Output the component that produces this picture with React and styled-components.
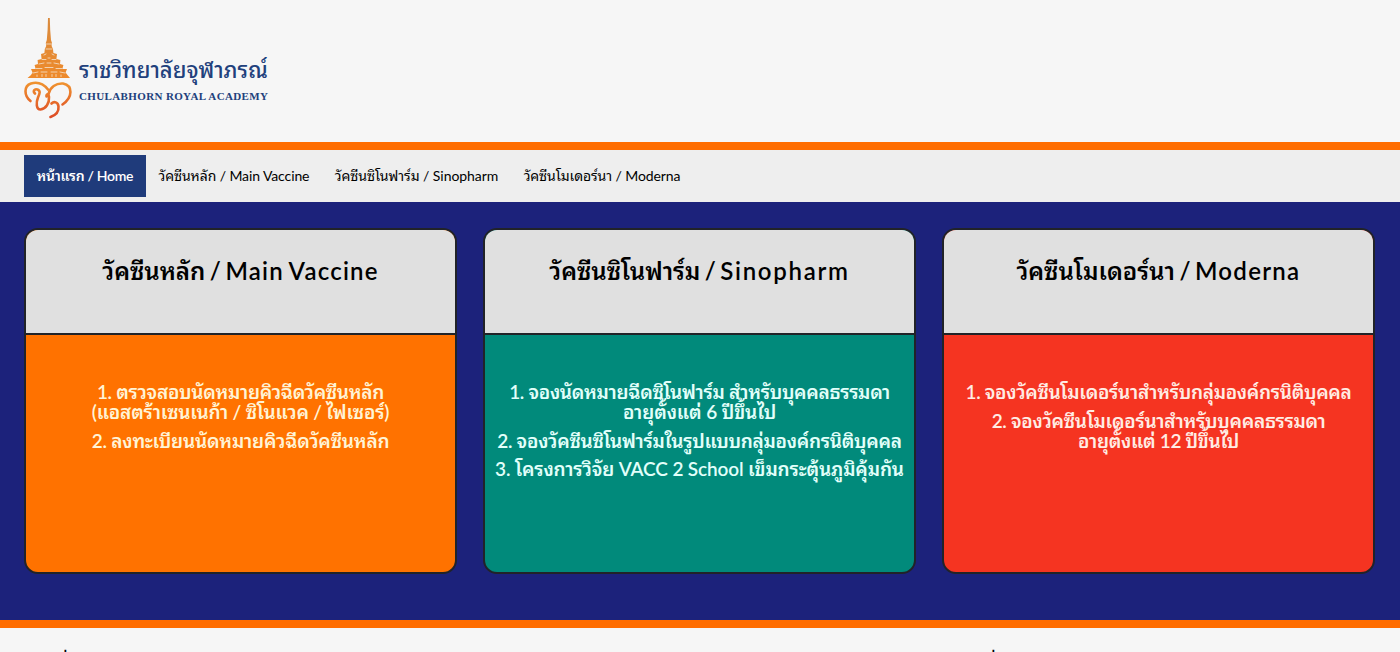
import React from "react";
import styled, { createGlobalStyle } from "styled-components";

const GlobalStyle = createGlobalStyle`
  * {
    box-sizing: border-box;
  }

  body {
    margin: 0;
    overflow: hidden;
    background-color: #f6f6f6;
    font-family: Lato, "Noto Sans Thai Looped", "Noto Sans Thai", sans-serif;
    color: #000;
  }
`;

const Page = styled.div`
  display: flex;
  flex-direction: column;
  height: 652px;
  overflow: hidden;
`;

const Header = styled.header`
  display: flex;
  flex: none;
  height: 150px;
  padding: 18px 24px 0;
  border-bottom: 8px solid #ff6d00;
`;

const Emblem = styled.svg`
  width: 49px;
  height: 102px;
`;

const Brand = styled.div`
  color: #21407c;
  padding: 35px 0 0 6px;
  white-space: nowrap;
`;

const BrandThai = styled.div`
  font-size: 22px;
  font-weight: 500;
  line-height: 34px;
`;

const BrandLatin = styled.div`
  padding-top: 1px;
  font-family: "Liberation Serif", serif;
  font-size: 11px;
  font-weight: 700;
  line-height: 16px;
  letter-spacing: 0.37px;
`;

const Nav = styled.nav`
  display: flex;
  flex: none;
  height: 52px;
  padding: 5px 24px;
  background-color: #eee;
`;

const NavLink = styled.a`
  display: flex;
  align-items: center;
  justify-content: center;
  width: ${(props) => props.$width}px;
  padding-bottom: 4px;
  font-size: 14px;
  white-space: nowrap;
  letter-spacing: ${(props) => props.$spacing}px;
  color: ${(props) => (props.$active ? "#fff" : "#000")};
  font-weight: ${(props) => (props.$active ? 600 : 400)};
  background-color: ${(props) => (props.$active ? "#1f3b7b" : "transparent")};
`;

const Main = styled.main`
  display: grid;
  grid-template-columns: repeat(3, 1fr);
  gap: 26px;
  flex: none;
  height: 426px;
  padding: 26px 25px 46px 24px;
  background-color: #1c227b;
  border-bottom: 8px solid #ff6d00;
`;

const Card = styled.section`
  border: 2px solid #212328;
  border-radius: 14px;
  overflow: hidden;
  background-color: ${(props) => props.$color};
`;

const CardTitle = styled.h2`
  height: 105px;
  margin: 0;
  padding-top: 25px;
  background-color: #e0e0e0;
  border-bottom: 2px solid #212328;
  font-size: 24px;
  font-weight: 600;
  line-height: 32px;
  text-align: center;
  white-space: nowrap;
  word-spacing: -1.5px;
`;

const TitleLatin = styled.span`
  letter-spacing: ${(props) => props.$spacing}px;
`;

const CardList = styled.div`
  display: flex;
  flex-direction: column;
  align-items: center;
  gap: 8.5px;
  padding-top: 47px;
  color: ${(props) => props.$color};
`;

const CardItem = styled.div`
  display: flex;
  flex-direction: column;
  align-items: center;
`;

const Line = styled.span`
  font-size: 19px;
  font-weight: 600;
  line-height: 20px;
  white-space: nowrap;
  letter-spacing: ${(props) => props.$spacing}px;
`;

const Footer = styled.footer`
  display: grid;
  grid-template-columns: 928px 1fr;
  padding: 19px 0 0 49px;
  font-size: 20px;
  line-height: 32px;
  white-space: nowrap;
`;

const links = [
  { text: "หน้าแรก / Home", width: 122, spacing: -0.3, active: true },
  { text: "วัคซีนหลัก / Main Vaccine", width: 176, spacing: -0.1 },
  { text: "วัคซีนซิโนฟาร์ม / Sinopharm", width: 189, spacing: -0.05 },
  { text: "วัคซีนโมเดอร์นา / Moderna", width: 182, spacing: -0.1 },
];

const cards = [
  {
    title: "วัคซีนหลัก",
    latin: "Main Vaccine",
    spacing: 1.2,
    color: "#ff7200",
    ink: "#fff4d6",
    items: [
      [
        ["1. ตรวจสอบนัดหมายคิวฉีดวัคซีนหลัก", -0.3],
        ["(แอสตร้าเซนเนก้า / ซิโนแวค / ไฟเซอร์)", -0.2],
      ],
      [["2. ลงทะเบียนนัดหมายคิวฉีดวัคซีนหลัก", -0.2]],
    ],
  },
  {
    title: "วัคซีนซิโนฟาร์ม",
    latin: "Sinopharm",
    spacing: 1.7,
    color: "#018a7b",
    ink: "#e2fffa",
    items: [
      [
        ["1. จองนัดหมายฉีดซิโนฟาร์ม สำหรับบุคคลธรรมดา", -0.31],
        ["อายุตั้งแต่ 6 ปีขึ้นไป", -0.1],
      ],
      [["2. จองวัคซีนซิโนฟาร์มในรูปแบบกลุ่มองค์กรนิติบุคคล", -0.28]],
      [["3. โครงการวิจัย VACC 2 School เข็มกระตุ้นภูมิคุ้มกัน", -0.14]],
    ],
  },
  {
    title: "วัคซีนโมเดอร์นา",
    latin: "Moderna",
    spacing: 1.3,
    color: "#f53421",
    ink: "#ffece4",
    items: [
      [["1. จองวัคซีนโมเดอร์นาสำหรับกลุ่มองค์กรนิติบุคคล", -0.31]],
      [
        ["2. จองวัคซีนโมเดอร์นาสำหรับบุคคลธรรมดา", -0.3],
        ["อายุตั้งแต่ 12 ปีขึ้นไป", -0.3],
      ],
    ],
  },
];

const Logo = () => (
  <Emblem viewBox="0 0 49 102" fill="none" strokeLinecap="round" strokeLinejoin="round">
    <defs>
      <linearGradient id="gold" x1="0" y1="0" x2="0" y2="1">
        <stop offset="0" stopColor="#d98a3d" />
        <stop offset="1" stopColor="#ee8a2b" />
      </linearGradient>
      <linearGradient id="flame" gradientUnits="userSpaceOnUse" x1="0" y1="64" x2="0" y2="100">
        <stop offset="0" stopColor="#f0942f" />
        <stop offset="1" stopColor="#dd4a26" />
      </linearGradient>
    </defs>
    {/* spire and tiered roof */}
    <path
      fill="url(#gold)"
      d="M24 0 H25.8 L26.2 12 L27 22 L28 25 L27.6 28 L29 31 L29.4 35 L33 36 L32.4 41 L36.4 42 L36 46 L39.4 47 L38.4 51 L43 51 L41.6 54.5 L43.5 57 L46 60 H3.5 L7 57 L8.5 54.5 L7 51 L11.6 51 L10.6 47 L14 46 L13.6 42 L17.6 41 L17 36 L20.4 35 L20.8 31 L22.2 28 L21.8 25 L22.8 22 L23.6 12 Z"
    />
    <path
      stroke="#f6f0e8"
      strokeWidth="0.7"
      d="M22.5 26 H27.5 M22 31 H28 M20 37 L22 36 M28 36 L30 37 M18 41.5 H22 M24 40 H26 M28 41.5 H32 M15 46 L20 45 M23 45 H27 M30 45 L35 46 M12 50.5 H18 M21 49.5 H29 M32 50.5 H38 M9 55 L14 54 M17 54 H23 M27 54 H33 M36 54 L41 55 M13 58.5 V57 M18 58.5 V56.5 M22 58.5 V56.5 M28 58.5 V56.5 M32 58.5 V56.5 M37 58.5 V57"
    />
    {/* heart monogram */}
    <g stroke="url(#flame)" strokeWidth="2.6">
      <path d="M6.5 83 C0 78 -0.5 68 7 65.5 C14 63.5 20 66.5 24 71.5" />
      <path d="M11 75.5 C8.5 73 10.5 70.5 13.5 71.5 C17 73 15.5 76 14 79.5 C12 84.5 12 91.5 16.5 91.5 C22 91 25.5 85 25 79 C24.5 75 22 76 22.5 78.5" />
      <path d="M24.5 76 C26 69 32 65 39 65.5 C49 67.5 49 79 38.5 86.5" />
      <path d="M27.5 85.5 C30 83 34 84 34.5 88.5 C35 94 31 97.5 26.5 99" />
    </g>
  </Emblem>
);

const App = () => (
  <>
    <GlobalStyle />
    <Page>
      <Header>
        <Logo />
        <Brand>
          <BrandThai>ราชวิทยาลัยจุฬาภรณ์</BrandThai>
          <BrandLatin>CHULABHORN ROYAL ACADEMY</BrandLatin>
        </Brand>
      </Header>
      <Nav>
        {links.map((link) => (
          <NavLink key={link.text} $width={link.width} $spacing={link.spacing} $active={link.active}>
            {link.text}
          </NavLink>
        ))}
      </Nav>
      <Main>
        {cards.map((card) => (
          <Card key={card.title} $color={card.color}>
            <CardTitle>
              {card.title} / <TitleLatin $spacing={card.spacing}>{card.latin}</TitleLatin>
            </CardTitle>
            <CardList $color={card.ink}>
              {card.items.map((lines) => (
                <CardItem key={lines[0][0]}>
                  {lines.map(([text, spacing]) => (
                    <Line key={text} $spacing={spacing}>{text}</Line>
                  ))}
                </CardItem>
              ))}
            </CardList>
          </Card>
        ))}
      </Main>
      <Footer>
        <span>เกี่ยวกับเรา</span>
        <span>เกี่ยวข้อง</span>
      </Footer>
    </Page>
  </>
);

export default App;
